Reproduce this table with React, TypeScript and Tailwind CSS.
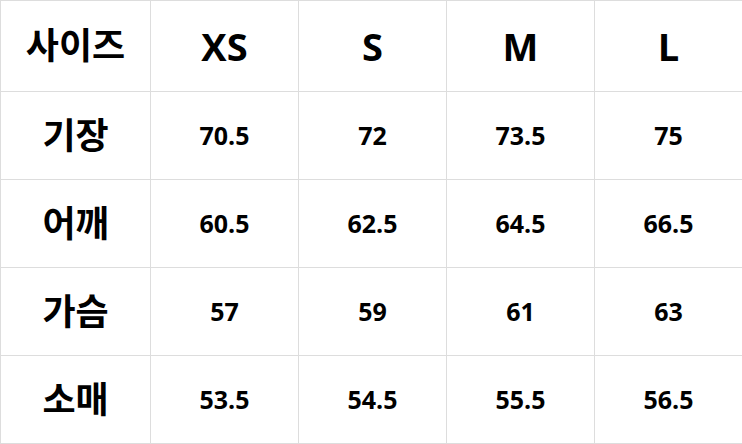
import React from 'react';

const sizes = ['XS', 'S', 'M', 'L'];

const rows = [
  { label: '기장', values: ['70.5', '72', '73.5', '75'] },
  { label: '어깨', values: ['60.5', '62.5', '64.5', '66.5'] },
  { label: '가슴', values: ['57', '59', '61', '63'] },
  { label: '소매', values: ['53.5', '54.5', '55.5', '56.5'] },
];

const App: React.FC = () => {
  return (
    <div className="w-[742px] h-[444px] bg-white font-['Open_Sans','Noto_Sans_CJK_KR',sans-serif] text-black">
      <table className="w-[742px] table-fixed border-collapse">
        <colgroup>
          <col className="w-[150px]" />
          <col className="w-[148px]" />
          <col className="w-[148px]" />
          <col className="w-[148px]" />
          <col className="w-[148px]" />
        </colgroup>
        <thead>
          <tr className="h-[91px]">
            <th className="border border-[#dddddd] text-[36px] font-bold">사이즈</th>
            {sizes.map((s) => (
              <th key={s} className="border border-[#dddddd] text-[38px] font-bold">
                {s}
              </th>
            ))}
          </tr>
        </thead>
        <tbody>
          {rows.map((row) => (
            <tr key={row.label} className="h-[88px]">
              <td className="border border-[#dddddd] text-center text-[36px] font-bold">{row.label}</td>
              {row.values.map((v, i) => (
                <td key={i} className="border border-[#dddddd] text-center text-[25px] font-bold">
                  {v}
                </td>
              ))}
            </tr>
          ))}
        </tbody>
      </table>
    </div>
  );
};

export default App;
